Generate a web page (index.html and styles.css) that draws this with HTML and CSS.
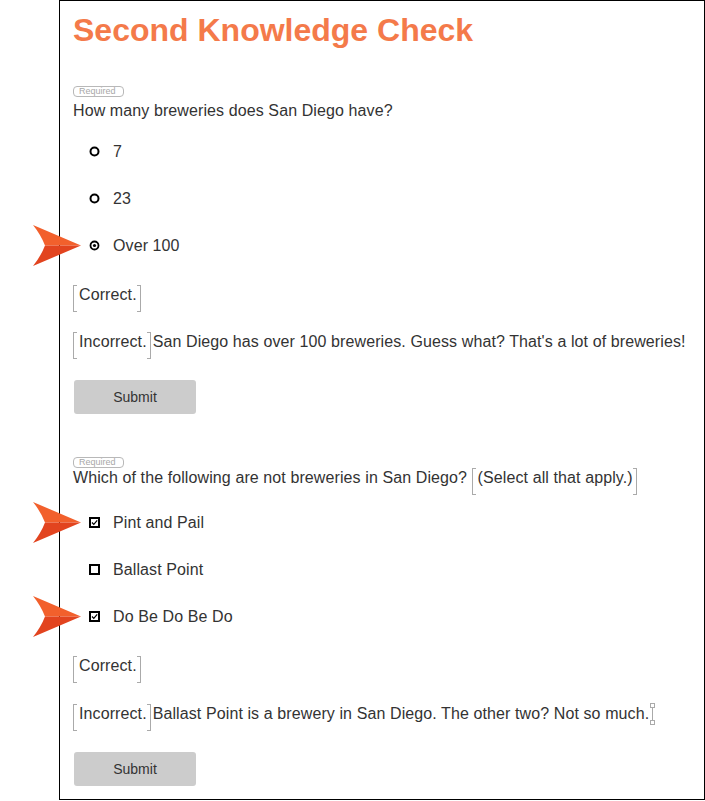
FILE: index.html
```html
<!DOCTYPE html>
<html lang="en">
<head>
    <meta charset="UTF-8">
    <meta name="viewport" content="width=device-width, initial-scale=1.0">
    <title>Second Knowledge Check</title>
    <link rel="stylesheet" href="styles.css">
</head>
<body>
    <div class="page">
        <h1 class="title">Second Knowledge Check</h1>

        <!-- Question 1: single choice -->
        <div class="question">
            <span class="required">Required</span>
            <p class="question-text">How many breweries does San Diego have?</p>
            <ul class="options">
                <li class="option">
                    <svg class="mark" viewBox="0 0 11 11"><circle cx="5.5" cy="5.5" r="4" fill="#fff" stroke="#000" stroke-width="2"/></svg>
                    <span>7</span>
                </li>
                <li class="option">
                    <svg class="mark" viewBox="0 0 11 11"><circle cx="5.5" cy="5.5" r="4" fill="#fff" stroke="#000" stroke-width="2"/></svg>
                    <span>23</span>
                </li>
                <li class="option">
                    <svg class="pointer" viewBox="0 0 48 41"><path d="M0 0 L48 20.5 L12 20.5 Q8 10 0 0 Z" fill="#f2602c"/><path d="M12 20.5 L48 20.5 L0 41 Q8 31 12 20.5 Z" fill="#e2441f"/></svg>
                    <svg class="mark" viewBox="0 0 11 11"><circle cx="5.5" cy="5.5" r="4" fill="#fff" stroke="#000" stroke-width="1.8"/><circle cx="5.5" cy="5.5" r="1.6" fill="#000"/></svg>
                    <span>Over 100</span>
                </li>
            </ul>
            <p class="feedback"><span class="bracket">Correct.</span></p>
            <p class="feedback"><span class="bracket">Incorrect.</span>San Diego has over 100 breweries. Guess what? That's a lot of breweries!</p>
            <button class="submit">Submit</button>
        </div>

        <!-- Question 2: multiple choice -->
        <div class="question">
            <span class="required">Required</span>
            <p class="question-text with-note">Which of the following are not breweries in San Diego? <span class="bracket">(Select all that apply.)</span></p>
            <ul class="options">
                <li class="option">
                    <svg class="pointer" viewBox="0 0 48 41"><path d="M0 0 L48 20.5 L12 20.5 Q8 10 0 0 Z" fill="#f2602c"/><path d="M12 20.5 L48 20.5 L0 41 Q8 31 12 20.5 Z" fill="#e2441f"/></svg>
                    <svg class="mark" viewBox="0 0 11 11"><rect x="1" y="1" width="9" height="9" fill="#fff" stroke="#000" stroke-width="2"/><path d="M3 5.5 L4.8 7.4 L8.2 3.4" fill="none" stroke="#000" stroke-width="1.2"/></svg>
                    <span>Pint and Pail</span>
                </li>
                <li class="option">
                    <svg class="mark" viewBox="0 0 11 11"><rect x="1" y="1" width="9" height="9" fill="#fff" stroke="#000" stroke-width="2"/></svg>
                    <span>Ballast Point</span>
                </li>
                <li class="option">
                    <svg class="pointer" viewBox="0 0 48 41"><path d="M0 0 L48 20.5 L12 20.5 Q8 10 0 0 Z" fill="#f2602c"/><path d="M12 20.5 L48 20.5 L0 41 Q8 31 12 20.5 Z" fill="#e2441f"/></svg>
                    <svg class="mark" viewBox="0 0 11 11"><rect x="1" y="1" width="9" height="9" fill="#fff" stroke="#000" stroke-width="2"/><path d="M3 5.5 L4.8 7.4 L8.2 3.4" fill="none" stroke="#000" stroke-width="1.2"/></svg>
                    <span>Do Be Do Be Do</span>
                </li>
            </ul>
            <p class="feedback"><span class="bracket">Correct.</span></p>
            <p class="feedback"><span class="bracket">Incorrect.</span>Ballast Point is a brewery in San Diego. The other two? Not so much.<svg class="handle" viewBox="0 0 6 22"><rect x="1.5" y="0.5" width="4" height="4" fill="#fff" stroke="#aaa"/><line x1="3.5" y1="4.5" x2="3.5" y2="17.5" stroke="#aaa"/><rect x="1.5" y="17.5" width="4" height="4" fill="#fff" stroke="#aaa"/></svg></p>
            <button class="submit">Submit</button>
        </div>
    </div>
</body>
</html>
```

FILE: styles.css
```css
* {
    margin: 0;
    padding: 0;
    box-sizing: border-box;
}

body {
    font-family: "Liberation Sans", Arial, sans-serif;
    color: #333;
    background-color: #fff;
}

.page {
    margin-left: 59px;
    width: 646px;
    height: 800px;
    border: 1px solid #000;
    padding: 0 13px;
}

.title {
    margin-top: 11px;
    font-size: 32px;
    line-height: 37px;
    font-weight: 700;
    color: #f47a4a;
}

.question {
    margin-top: 37px;
}

.question + .question {
    margin-top: 43px;
}

.required {
    display: block;
    width: 51px;
    height: 11px;
    padding-left: 5px;
    border: 1px solid #b8b8b8;
    border-radius: 4px;
    font-size: 9px;
    line-height: 9px;
    color: #a8a8a8;
}

.question-text,
.option,
.feedback {
    font-size: 16px;
    letter-spacing: 0.1px;
}

.question-text {
    line-height: 27px;
}

/* the bracketed note sets the line height on its own */
.question-text.with-note {
    line-height: 20px;
}

.options {
    list-style: none;
    margin: 4px 0 16px;
}

.option {
    position: relative;
    display: flex;
    align-items: center;
    height: 47px;
    padding-left: 16px;
    line-height: 18px;
}

.mark {
    flex: none;
    width: 11px;
    height: 11px;
    margin-right: 13px;
}

.pointer {
    position: absolute;
    left: -40px;
    top: 3px;
    width: 48px;
    height: 41px;
}

.feedback {
    line-height: 18px;
    margin-bottom: 20px;
}

.bracket {
    position: relative;
    display: inline-block;
    padding: 1px 3px 8px 5px;
    margin-right: 2px;
    line-height: 18px;
    border-left: 1px solid #aaa;
    border-right: 1px solid #aaa;
}

.bracket::before,
.bracket::after {
    content: "";
    position: absolute;
    top: 0;
    bottom: 0;
    width: 3px;
    border-top: 1px solid #aaa;
    border-bottom: 1px solid #aaa;
}

.bracket::before {
    left: 0;
}

.bracket::after {
    right: 0;
}

.question-text .bracket {
    margin-right: 0;
}

.handle {
    width: 6px;
    height: 22px;
    vertical-align: -6px;
}

.submit {
    display: block;
    width: 122px;
    height: 34px;
    margin: 21px 0 0 1px;
    border: none;
    border-radius: 3px;
    background-color: #ccc;
    font-family: "Liberation Sans", Arial, sans-serif;
    font-size: 14px;
    color: #333;
}
```
